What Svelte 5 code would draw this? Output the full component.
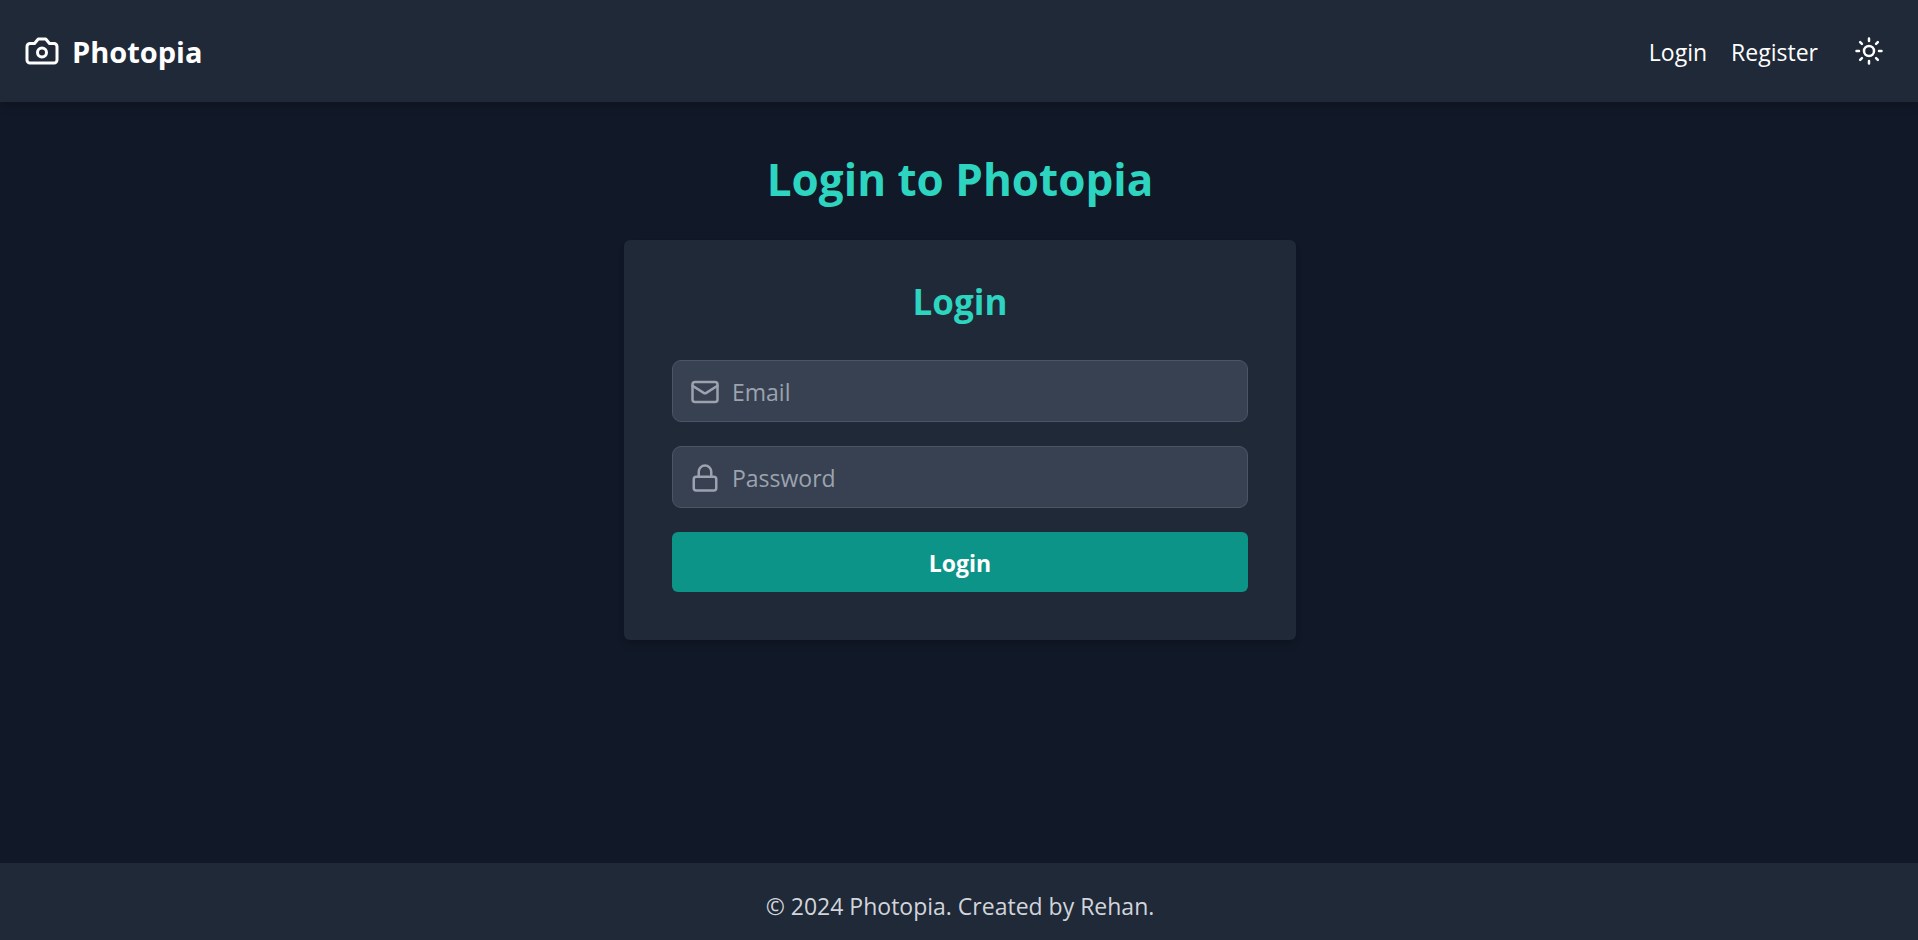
<script>
  let email = $state('');
  let password = $state('');

  function submit(event) {
    event.preventDefault();
  }
</script>

<svelte:head>
  <title>Photopia</title>
</svelte:head>

<div class="page">
  <header>
    <a class="brand" href="#home">
      <svg width="36" height="36" viewBox="0 0 24 24" aria-hidden="true">
        <path d="M14.5 4h-5L7 7H4a2 2 0 0 0-2 2v9a2 2 0 0 0 2 2h16a2 2 0 0 0 2-2V9a2 2 0 0 0-2-2h-3l-2.5-3z" />
        <circle cx="12" cy="13" r="3" />
      </svg>
      <span class="label">Photopia</span>
    </a>
    <nav>
      <a class="label" href="#login">Login</a>
      <a class="label" href="#register">Register</a>
      <button class="theme" type="button" aria-label="Toggle theme">
        <svg width="30" height="30" viewBox="0 0 24 24" aria-hidden="true">
          <circle cx="12" cy="12" r="4" />
          <path d="M12 2v2M12 20v2M4.93 4.93l1.41 1.41M17.66 17.66l1.41 1.41M2 12h2M20 12h2M6.34 17.66l-1.41 1.41M19.07 4.93l-1.41 1.41" />
        </svg>
      </button>
    </nav>
  </header>

  <main>
    <h1>Login to Photopia</h1>
    <form class="card" onsubmit={submit}>
      <h2>Login</h2>
      <label class="field">
        <svg width="30" height="30" viewBox="0 0 24 24" aria-hidden="true">
          <rect width="20" height="16" x="2" y="4" rx="2" />
          <path d="m22 7-8.97 5.7a1.94 1.94 0 0 1-2.06 0L2 7" />
        </svg>
        <input type="email" placeholder="Email" aria-label="Email" bind:value={email} />
      </label>
      <label class="field">
        <svg width="30" height="30" viewBox="0 0 24 24" aria-hidden="true">
          <rect width="18" height="11" x="3" y="11" rx="2" />
          <path d="M7 11V7a5 5 0 0 1 10 0v4" />
        </svg>
        <input type="password" placeholder="Password" aria-label="Password" bind:value={password} />
      </label>
      <button class="submit" type="submit">Login</button>
    </form>
  </main>

  <footer>© 2024 Photopia. Created by Rehan.</footer>
</div>

<style>
  :global(body) {
    background: #111827;
  }

  .page {
    display: flex;
    flex-direction: column;
    min-height: 100vh;
    background: #111827;
    color: #fff;
    font-family: 'Segoe UI', 'Open Sans', 'Noto Sans', sans-serif;
    font-size: 23px;
    line-height: 36px;
  }

  .page * {
    box-sizing: border-box;
  }

  svg {
    display: block;
    flex: none;
    fill: none;
    stroke: currentColor;
    stroke-width: 2;
    stroke-linecap: round;
    stroke-linejoin: round;
  }

  a {
    color: inherit;
    text-decoration: none;
  }

  button,
  input {
    font: inherit;
    color: inherit;
  }

  header {
    display: flex;
    align-items: center;
    justify-content: space-between;
    padding: 24px;
    background: #1f2937;
    box-shadow: 0 6px 9px -1px rgb(0 0 0 / 0.1), 0 3px 6px -2px rgb(0 0 0 / 0.1);
  }

  .brand {
    display: flex;
    align-items: center;
    gap: 12px;
    font-size: 29px;
    font-weight: 700;
  }

  .label {
    padding-top: 2px;
  }

  nav {
    display: flex;
    align-items: center;
    gap: 24px;
  }

  .theme {
    margin-left: 2px;
    padding: 12px 10px;
    border: 0;
    border-radius: 50%;
    background: none;
    cursor: pointer;
  }

  main {
    flex: 1;
    padding: 50px 24px 48px 26px;
  }

  h1,
  h2 {
    margin: 0;
    color: #2dd4bf;
    font-weight: 700;
    text-align: center;
  }

  h1 {
    margin-bottom: 34px;
    font-size: 44px;
    line-height: 54px;
  }

  h2 {
    margin-bottom: 10px;
    font-size: 35px;
    line-height: 48px;
  }

  .card {
    display: flex;
    flex-direction: column;
    gap: 24px;
    max-width: 672px;
    margin: 0 auto;
    padding: 38px 48px 48px;
    border-radius: 6px;
    background: #1f2937;
    box-shadow: 0 6px 9px -1px rgb(0 0 0 / 0.1), 0 3px 6px -2px rgb(0 0 0 / 0.1);
  }

  .field {
    display: flex;
    align-items: center;
    gap: 12px;
    padding: 2px 17px 0;
    border: 1px solid #4b5563;
    border-radius: 9px;
    background: #374151;
    color: #9ca3af;
  }

  .field:focus-within {
    border-color: #2dd4bf;
  }

  .field input {
    flex: 1;
    min-width: 0;
    height: 58px;
    padding: 0;
    border: 0;
    outline: 0;
    background: none;
    color: #fff;
  }

  .field input::placeholder {
    color: #9ca3af;
    opacity: 1;
  }

  .submit {
    padding: 13px 12px 11px;
    border: 0;
    border-radius: 6px;
    background: #0d9488;
    font-weight: 700;
    cursor: pointer;
  }

  footer {
    padding: 25px 24px 16px 26px;
    background: #1f2937;
    color: #d1d5db;
    text-align: center;
  }
</style>
